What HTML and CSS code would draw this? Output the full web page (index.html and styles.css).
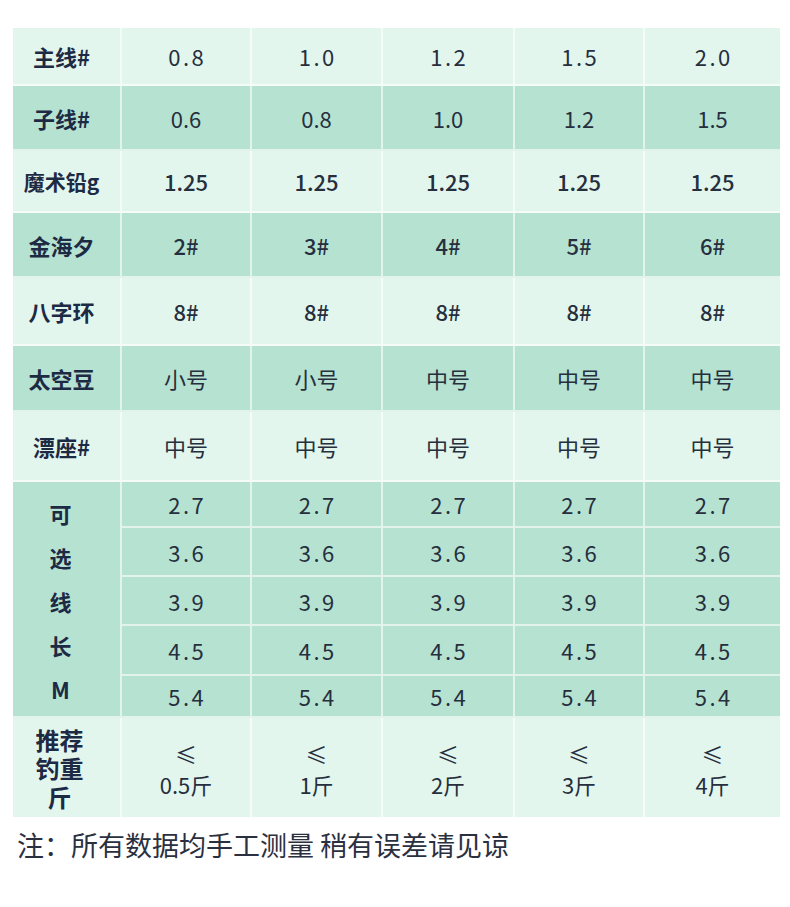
FILE: index.html
```html
<!DOCTYPE html>
<html lang="zh-CN">
<head>
<meta charset="utf-8">
<link rel="stylesheet" href="styles.css">
</head>
<body>
<div class="page">
  <div class="grid">
    <div class="c lab light">主线#</div>
    <div class="c val light spaced">0.8</div>
    <div class="c val light spaced">1.0</div>
    <div class="c val light spaced">1.2</div>
    <div class="c val light spaced">1.5</div>
    <div class="c val light spaced last">2.0</div>

    <div class="c lab dark">子线#</div>
    <div class="c val dark">0.6</div>
    <div class="c val dark">0.8</div>
    <div class="c val dark">1.0</div>
    <div class="c val dark">1.2</div>
    <div class="c val dark last">1.5</div>

    <div class="c lab light small">魔术铅g</div>
    <div class="c val light med">1.25</div>
    <div class="c val light med">1.25</div>
    <div class="c val light med">1.25</div>
    <div class="c val light med">1.25</div>
    <div class="c val light med last">1.25</div>

    <div class="c lab dark">金海夕</div>
    <div class="c val dark med">2#</div>
    <div class="c val dark med">3#</div>
    <div class="c val dark med">4#</div>
    <div class="c val dark med">5#</div>
    <div class="c val dark med last">6#</div>

    <div class="c lab light">八字环</div>
    <div class="c val light med">8#</div>
    <div class="c val light med">8#</div>
    <div class="c val light med">8#</div>
    <div class="c val light med">8#</div>
    <div class="c val light med last">8#</div>

    <div class="c lab dark">太空豆</div>
    <div class="c val dark">小号</div>
    <div class="c val dark">小号</div>
    <div class="c val dark">中号</div>
    <div class="c val dark">中号</div>
    <div class="c val dark last">中号</div>

    <div class="c lab light">漂座#</div>
    <div class="c val light">中号</div>
    <div class="c val light">中号</div>
    <div class="c val light">中号</div>
    <div class="c val light">中号</div>
    <div class="c val light last">中号</div>

    <div class="c lab dark stack">可<br>选<br>线<br>长<br>M</div>
    <div class="c val dark spaced">2.7</div>
    <div class="c val dark spaced">2.7</div>
    <div class="c val dark spaced">2.7</div>
    <div class="c val dark spaced">2.7</div>
    <div class="c val dark spaced last">2.7</div>
    <div class="c val dark spaced">3.6</div>
    <div class="c val dark spaced">3.6</div>
    <div class="c val dark spaced">3.6</div>
    <div class="c val dark spaced">3.6</div>
    <div class="c val dark spaced last">3.6</div>
    <div class="c val dark spaced">3.9</div>
    <div class="c val dark spaced">3.9</div>
    <div class="c val dark spaced">3.9</div>
    <div class="c val dark spaced">3.9</div>
    <div class="c val dark spaced last">3.9</div>
    <div class="c val dark spaced">4.5</div>
    <div class="c val dark spaced">4.5</div>
    <div class="c val dark spaced">4.5</div>
    <div class="c val dark spaced">4.5</div>
    <div class="c val dark spaced last">4.5</div>
    <div class="c val dark spaced">5.4</div>
    <div class="c val dark spaced">5.4</div>
    <div class="c val dark spaced">5.4</div>
    <div class="c val dark spaced">5.4</div>
    <div class="c val dark spaced last">5.4</div>

    <div class="c lab light wrap bottom">推荐<br>钓重<br>斤</div>
    <div class="c val light two bottom">≤<br>0.5斤</div>
    <div class="c val light two bottom">≤<br>1斤</div>
    <div class="c val light two bottom">≤<br>2斤</div>
    <div class="c val light two bottom">≤<br>3斤</div>
    <div class="c val light two bottom last">≤<br>4斤</div>
  </div>
  <p class="note">注：所有数据均手工测量 稍有误差请见谅</p>
</div>
</body>
</html>
```

FILE: styles.css
```css
html, body {
  margin: 0;
  padding: 0;
  background: #ffffff;
}

.page {
  padding: 28px 10px 0 13px;
  font-family: "Noto Sans CJK SC", "Noto Sans", sans-serif;
}

.grid {
  display: grid;
  width: 767px;
  grid-template-columns: 109px 130px 131px 132px 130px 135px;
  grid-template-rows: 58px 65px 62px 65px 68px 66px 70px 46px 49px 49px 50px 42px 99px;
}

.c {
  display: flex;
  align-items: center;
  justify-content: center;
  text-align: center;
  box-sizing: border-box;
  border-right: 2px solid rgba(255, 255, 255, 0.6);
  border-bottom: 2px solid rgba(255, 255, 255, 0.6);
}

.c.last {
  border-right: none;
}

.c.bottom {
  border-bottom: none;
}

.light {
  background: #e3f6ee;
}

.dark {
  background: #b6e2d2;
}

.lab {
  font-size: 22px;
  font-weight: 700;
  color: #1d2a44;
  padding-right: 10px;
  line-height: 1;
}

.lab.small {
  font-size: 21px;
}

.lab.stack {
  grid-row: span 5;
  line-height: 44px;
  padding-right: 12px;
  padding-top: 4px;
}

.lab.wrap {
  font-size: 24px;
  line-height: 28.5px;
  padding-right: 14px;
  padding-top: 2px;
}

.val {
  font-size: 22px;
  font-weight: 400;
  color: #262f3d;
  line-height: 1;
}

.val.spaced {
  letter-spacing: 2.5px;
  text-indent: 2.5px;
}

.val.med {
  font-weight: 500;
}

.val.two {
  line-height: 31px;
  padding-top: 2px;
}

.note {
  margin: 0;
  padding-top: 14px;
  padding-left: 4px;
  font-size: 27px;
  line-height: 28px;
  color: #2b3040;
}
```
